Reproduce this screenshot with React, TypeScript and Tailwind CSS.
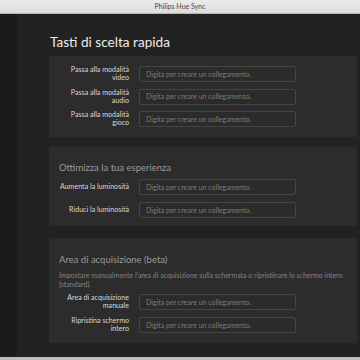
import React from "react";

const font = { fontFamily: "Lato, 'Open Sans', 'Liberation Sans', sans-serif" };

function Input() {
  return (
    <div className="h-[16px] w-[157px] shrink-0 rounded-[2px] border border-[#454545] bg-[#2b2b2b] flex items-center pl-[6px] text-[7px] text-[#7d7d7d] leading-none">
      Digita per creare un collegamento.
    </div>
  );
}

function Row({ lines }: { lines: string[] }) {
  return (
    <div className="flex items-center h-[16px]">
      <div className="w-[70px] shrink-0 text-right text-[7.1px] leading-[8px] text-[#d8d8d8] whitespace-nowrap">
        {lines.map((l, i) => (
          <div key={i}>{l}</div>
        ))}
      </div>
      <div className="w-[10px] shrink-0" />
      <Input />
    </div>
  );
}

export default function App() {
  return (
    <div className="w-[360px] h-[360px] overflow-hidden flex flex-col bg-[#222222]" style={font}>
      <div className="h-[14px] shrink-0 bg-gradient-to-b from-[#ececec] to-[#dcdcdc] border-b border-[#b5b5b5] flex items-center justify-center text-[7px] text-[#4a4a4a]">
        Philips Hue Sync
      </div>
      <div className="flex flex-1 min-h-0">
        <div className="w-[17px] shrink-0 bg-[#1b1b1b]" />
        <div className="flex-1 flex flex-col pl-[32px] pr-[3px] bg-[#222222]">
          <div className="h-[42px] shrink-0 flex items-end pb-[6px] pl-[1px] text-[13.6px] leading-none text-[#ececec]">
            Tasti di scelta rapida
          </div>
          <div className="bg-[#2c2c2c] pl-[10px] pt-[10px] pb-[10px] flex flex-col gap-[6.5px]">
            <Row lines={["Passa alla modalità", "video"]} />
            <Row lines={["Passa alla modalità", "audio"]} />
            <Row lines={["Passa alla modalità", "gioco"]} />
          </div>
          <div className="h-[10px] shrink-0" />
          <div className="bg-[#2c2c2c] pl-[10px] pt-[16px] pb-[8px] flex flex-col">
            <div className="h-[9.5px] text-[9.5px] leading-[9.5px] text-[#9a9a9a] mb-[6.5px]">Ottimizza la tua esperienza</div>
            <div className="flex flex-col gap-[7px]">
              <Row lines={["Aumenta la luminosità"]} />
              <Row lines={["Riduci la luminosità"]} />
            </div>
          </div>
          <div className="h-[12px] shrink-0" />
          <div className="bg-[#2c2c2c] pl-[10px] pt-[17px] pb-[10px] flex flex-col">
            <div className="h-[9.5px] text-[9.5px] leading-[9.5px] text-[#9a9a9a] mb-[6px]">Area di acquisizione (beta)</div>
            <div className="text-[7px] leading-[9px] text-[#858585] pr-[10px] mb-[5.5px]">
              Impostare manualmente l'area di acquisizione sulla schermata o ripristinare lo schermo intero (standard).
            </div>
            <div className="flex flex-col gap-[7px]">
              <Row lines={["Area di acquisizione", "manuale"]} />
              <Row lines={["Ripristina schermo", "intero"]} />
            </div>
          </div>
          <div className="flex-1" />
        </div>
      </div>
      <div className="h-[3px] shrink-0 bg-[#bdbdbd]" />
    </div>
  );
}
